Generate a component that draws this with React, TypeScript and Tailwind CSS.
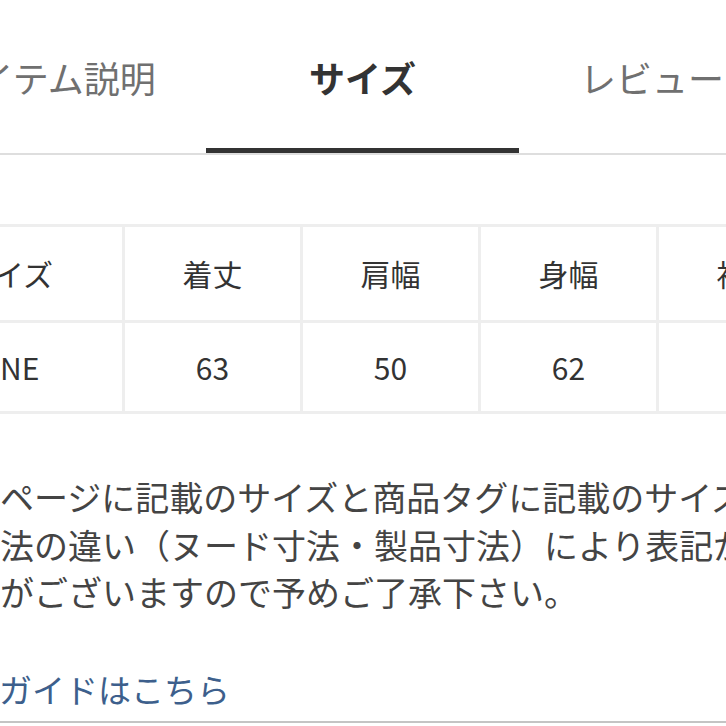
const tabs = ["アイテム説明", "サイズ", "レビュー"];

const headers = ["サイズ", "着丈", "肩幅", "身幅", "袖丈"];
const values = ["ONE", "63", "50", "62", "57"];
const colWidths = ["w-[230px]", "w-[178px]", "w-[178px]", "w-[178px]", "w-[178px]"];

const noteLines = [
  "※このページに記載のサイズと商品タグに記載のサイズは、",
  "採寸方法の違い（ヌード寸法・製品寸法）により表記が異な",
  "る場合がございますので予めご了承下さい。",
];

export default function App() {
  return (
    <div
      className="w-[726px] h-[726px] overflow-hidden bg-white text-[#333]"
      style={{ fontFamily: '"Noto Sans CJK JP", "Noto Sans", sans-serif' }}
    >
      {/* tabs */}
      <div className="border-b-2 border-[#dedede]">
        <div className="-ml-[107px] flex">
          {tabs.map((t, i) => {
            const active = i === 1;
            return (
              <div key={t} className="w-[313px] shrink-0 flex flex-col">
                <div
                  className={`h-[148px] flex items-center pt-[6px] whitespace-nowrap text-[36px] ${
                    i === 2 ? "justify-start pl-[61px]" : "justify-center"
                  } ${active ? "font-bold text-[#333]" : "text-[#707070]"}`}
                >
                  {t}
                </div>
                <div className={`h-[5px] ${active ? "bg-[#333]" : ""}`} />
              </div>
            );
          })}
        </div>
      </div>

      {/* size table */}
      <div className="mt-[69px] -ml-[108px] w-[960px]">
        <table className="table-fixed w-[942px] border-collapse text-[30px]">
          <colgroup>
            {colWidths.map((w, i) => (
              <col key={i} className={w} />
            ))}
          </colgroup>
          <tbody>
            <tr>
              {headers.map((h) => (
                <td
                  key={h}
                  className="h-[96px] border-[3px] border-[#eeeeee] text-center whitespace-nowrap"
                >
                  {h}
                </td>
              ))}
            </tr>
            <tr>
              {values.map((v, i) => (
                <td
                  key={i}
                  className="h-[91px] border-[3px] border-[#eeeeee] text-center whitespace-nowrap"
                >
                  {v}
                </td>
              ))}
            </tr>
          </tbody>
        </table>
      </div>

      {/* note */}
      <div className="mt-[59px] -ml-[102px] text-[34px] leading-[47.5px] text-[#444] whitespace-nowrap">
        {noteLines.map((l) => (
          <div key={l}>{l}</div>
        ))}
      </div>

      <div className="mt-[50px] -ml-[99px] text-[33px] leading-[47.5px] whitespace-nowrap">
        <a href="#" className="text-[#3d5f8c]">
          サイズガイドはこちら
        </a>
      </div>

      <div className="mt-[8px] h-[2px] bg-[#c4c4c4]" />
    </div>
  );
}
